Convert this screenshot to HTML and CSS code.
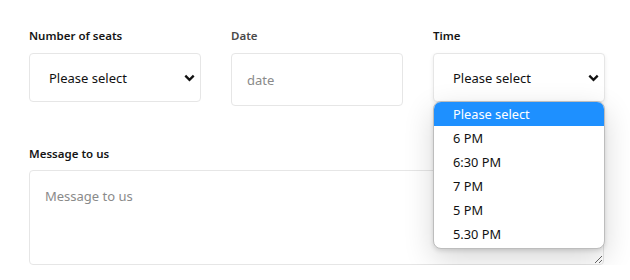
FILE: index.html
```html
<!DOCTYPE html>
<html lang="en">
<head>
  <meta charset="UTF-8" />
  <meta name="viewport" content="width=device-width, initial-scale=1.0" />
  <title>Reservation</title>
  <link rel="stylesheet" href="styles.css">
</head>
<body>

  <form class="booking">
    <div class="row">
      <div class="field">
        <label>Number of seats</label>
        <div class="select-box">
          <span>Please select</span>
          <svg class="chevron" width="11" height="8" viewBox="0 0 11 8"><path d="M1.3 1.6 5.5 5.8l4.2-4.2" fill="none" stroke="#111" stroke-width="2.3"/></svg>
        </div>
      </div>

      <div class="field">
        <label class="muted">Date</label>
        <input type="text" class="date-input" placeholder="date" />
      </div>

      <div class="field time-field">
        <label>Time</label>
        <div class="select-box focused">
          <span>Please select</span>
          <svg class="chevron" width="11" height="8" viewBox="0 0 11 8"><path d="M1.3 1.6 5.5 5.8l4.2-4.2" fill="none" stroke="#111" stroke-width="2.3"/></svg>
        </div>

        <!-- opened select list -->
        <ul class="options">
          <li class="active">Please select</li>
          <li>6 PM</li>
          <li>6:30 PM</li>
          <li>7 PM</li>
          <li>5 PM</li>
          <li>5.30 PM</li>
        </ul>
      </div>
    </div>

    <div class="field message">
      <label>Message to us</label>
      <textarea placeholder="Message to us"></textarea>
    </div>
  </form>

</body>
</html>
```

FILE: styles.css
```css
* {
  margin: 0; padding: 0;
  box-sizing: border-box;
  font-family: 'Noto Sans', 'Open Sans', sans-serif;
}

body {
  background: #fff;
  color: #111;
}

.booking {
  padding: 27px 0 0 29px;
  width: 604px;
}

.row {
  display: grid;
  grid-template-columns: repeat(3, 172px);
  gap: 30px;
  align-items: start;
}

.field {
  display: flex;
  flex-direction: column;
}

.field label {
  font-size: 11.5px;
  font-weight: 600;
  line-height: 18px;
  margin-bottom: 8px;
  color: #151515;
}

.field label.muted {
  color: #4a4a4a;
}

.select-box {
  height: 49px;
  border: 1px solid #e6e6e6;
  border-radius: 4px;
  display: flex;
  align-items: center;
  justify-content: space-between;
  padding: 0 5px 0 19px;
  font-size: 13px;
  background: #fff;
}

.select-box.focused {
  box-shadow: 0 2px 4px rgba(0,0,0,0.08);
}

.chevron {
  margin-top: 1px;
}

.date-input {
  height: 53px;
  border: 1px solid #e6e6e6;
  border-radius: 4px;
  padding: 0 15px;
  font-size: 13px;
  outline: none;
}

.date-input::placeholder,
textarea::placeholder {
  color: #8a8a8a;
}

.time-field {
  position: relative;
}

.options {
  list-style: none;
  position: absolute;
  left: 0;
  top: 74px;
  width: 172px;
  padding-bottom: 2px;
  background: #fff;
  border: 1px solid #bdbdbd;
  border-radius: 8px;
  overflow: hidden;
  box-shadow: 0 10px 30px rgba(0,0,0,0.16), 0 2px 4px rgba(0,0,0,0.12);
  z-index: 10;
}

.options li {
  height: 24px;
  line-height: 24px;
  padding-left: 19px;
  font-size: 12.8px;
  color: #111;
}

.options li.active {
  background: #1e90ff;
  color: #fff;
}

.message {
  margin-top: 39px;
}

.message label {
  margin-bottom: 7px;
}

textarea {
  width: 575px;
  height: 95px;
  border: 1px solid #e6e6e6;
  border-radius: 4px;
  padding: 16px 15px;
  font-size: 13px;
  outline: none;
  resize: vertical;
}
```
